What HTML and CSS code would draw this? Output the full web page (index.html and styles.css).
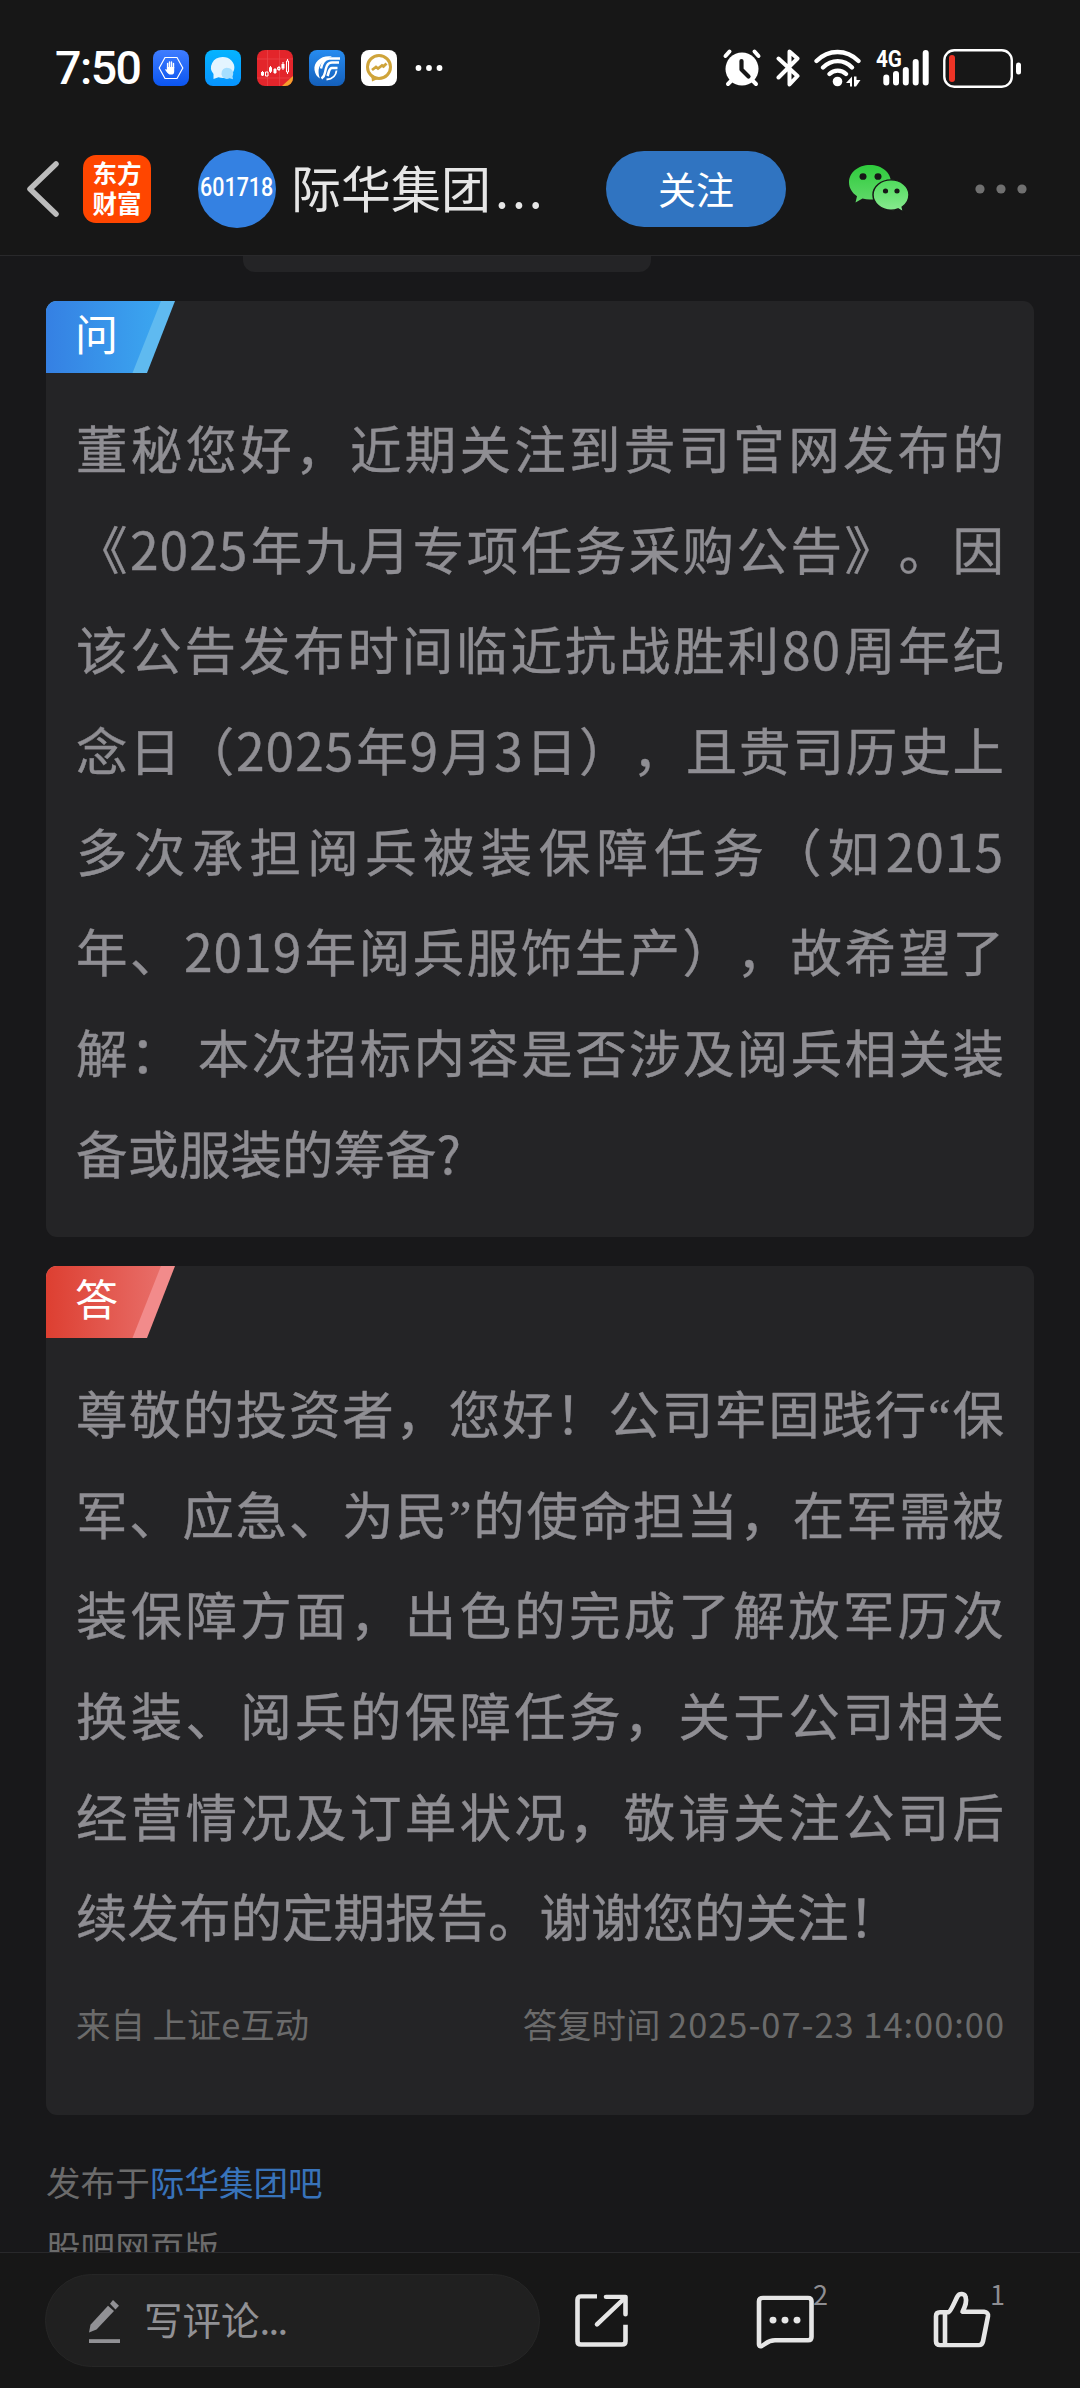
FILE: index.html
```html
<!DOCTYPE html>
<html lang="zh-CN">
<head>
    <meta charset="UTF-8">
    <meta name="viewport" content="width=device-width, initial-scale=1.0">
    <title>际华集团吧</title>
    <link rel="stylesheet" href="styles.css">
</head>
<body>
    <div class="page">
        <div class="status-bar">
            <span class="clock">7:50</span>
            <div class="app-icons">
                <svg width="36" height="36" viewBox="0 0 36 36">
                    <defs><linearGradient id="g1" x1="0" y1="0" x2="0" y2="1"><stop offset="0" stop-color="#3f7dff"/><stop offset="1" stop-color="#0b55f0"/></linearGradient></defs>
                    <rect width="36" height="36" rx="8" fill="url(#g1)"/>
                    <path d="M12 7.500h12l5.800 10.500-5.800 10.500H12L6.200 18z" fill="none" stroke="#fff" stroke-width="1.200"/>
                    <path d="M14.600 18v-4.500M16.500 18v-6M18.500 18v-6M20.500 18v-4.500" stroke="#fff" stroke-width="1.400" stroke-linecap="round"/>
                    <path d="M13.900 17h7.300v4.500c0 2-.8 3-2 3h-2.700c-1.500-.5-3-2.500-4.500-5 .8-.8 1.900.2 1.900.2z" fill="#fff"/>
                </svg>
                <svg width="36" height="36" viewBox="0 0 36 36">
                    <defs><linearGradient id="g2" x1="0" y1="0" x2="0" y2="1"><stop offset="0" stop-color="#05b4ff"/><stop offset="1" stop-color="#0794ff"/></linearGradient></defs>
                    <rect width="36" height="36" rx="8" fill="url(#g2)"/>
                    <path d="M17.500 7a11.500 10.500 0 1 1-4 20.200L8.500 29v-5A11.500 10.500 0 0 1 17.500 7z" fill="#e3f4ff"/>
                    <path d="M23 18a5.500 5.500 0 0 1 4.500 8.200l.5 3-3.500-1A5.500 5.500 0 1 1 23 18z" fill="#a5deff"/>
                </svg>
                <svg width="36" height="36" viewBox="0 0 36 36">
                    <rect width="36" height="36" rx="8" fill="#e3252b"/>
                    <path d="M10.500 0v36M22.500 0v36M0 9h36M0 28h36" stroke="#ea4348" stroke-width=".8"/>
                    <path d="M36 26v2a8 8 0 0 1-8 8h-3z" fill="#f5a02c"/>
                    <path d="M5.500 21v5M13.500 16v7M18 18v6M22 16v5M26 12v8" stroke="#fff" stroke-width="1"/>
                    <path d="M4 22h3v3.500H4zM16.500 19h3v4h-3zM24.500 14h3v4.500h-3z" fill="#fff"/>
                    <path d="M8.500 22h2.500v4H8.500zM12.500 17.500h2v4h-2zM20.500 17.500h2.500v2h-2.500zM29.500 11h2v11h-2zM30.500 9v2M30.500 22v2" fill="none" stroke="#fff" stroke-width="1"/>
                </svg>
                <svg width="36" height="36" viewBox="0 0 36 36">
                    <defs><linearGradient id="g3" x1="0" y1="0" x2="0" y2="1"><stop offset="0" stop-color="#278cf0"/><stop offset="1" stop-color="#145fba"/></linearGradient></defs>
                    <rect width="36" height="36" rx="8" fill="url(#g3)"/>
                    <path d="M23 6.500C12 5 4.500 12 5.500 20c.6 4 2.500 7 5.500 8.500-3-8-2-17 12-22z" fill="#fff"/>
                    <path d="M31 8.500H20c-5 .5-7 5-8 10M30 12.500h-7c-5 0-6 5-7 10-.5 3-2 5-3.500 6" fill="none" stroke="#fff" stroke-width="2.400"/>
                    <path d="M28.500 18h-5.500c-3 0-3 4-4.500 8" fill="none" stroke="#fff" stroke-width="2.600"/>
                    <path d="M27.500 20.500c-.5 5-4 8.500-10 9" fill="none" stroke="#fff" stroke-width="1.800"/>
                </svg>
                <svg width="36" height="36" viewBox="0 0 36 36">
                    <rect width="36" height="36" rx="8" fill="#fff"/>
                    <path d="M10 24l1 7.500 7-3z" fill="#cfa43a"/>
                    <circle cx="18" cy="17" r="11.500" fill="none" stroke="#cfa43a" stroke-width="3"/>
                    <path d="M11 20l4-3 2 1.500 4-3 1.500 1 3-3" fill="none" stroke="#cfa43a" stroke-width="2.800"/>
                </svg>
            </div>
            <svg class="more-apps" width="28" height="8" viewBox="0 0 28 8" fill="#fff"><circle cx="3.500" cy="4" r="2.900"/><circle cx="14" cy="4" r="2.900"/><circle cx="24.500" cy="4" r="2.900"/></svg>
            <div class="system-icons">
                <svg width="40" height="40" viewBox="0 0 40 40">
                    <path d="M3.500 8l4-4.500M36.500 8l-4-4.500M6 36l5-5M34 36l-5-5" stroke="#fff" stroke-width="4" stroke-linecap="round"/>
                    <circle cx="20" cy="21" r="16.500" fill="#fff"/>
                    <path d="M19.500 13v8.500l7 7" fill="none" stroke="#171717" stroke-width="4.200" stroke-linecap="round" stroke-linejoin="round"/>
                </svg>
                <svg class="bluetooth" width="24" height="40" viewBox="0 0 24 40"><path d="M2.500 10.500l19 17.500-8 8.500V3.500l8 7-19 19" fill="none" stroke="#fff" stroke-width="4" stroke-linejoin="round" stroke-linecap="round"/></svg>
                <svg class="wifi" width="48" height="40" viewBox="0 0 48 40">
                    <path d="M2.500 13c12-12 30-12 42 0M9 19.500c8.500-8.500 21-8.500 29 0M15.500 26c4.500-4.500 12-4.500 16.500 0" fill="none" stroke="#fff" stroke-width="4.300" stroke-linecap="round"/>
                    <circle cx="23.500" cy="33.500" r="4.800" fill="#fff"/>
                    <path d="M38 28.500v10h-2v-3.500h-4zM40 28.500v10h2l4.500-6.500h-4v-3.500z" fill="#fff"/>
                </svg>
                <div class="signal">
                    <span class="network">4G</span>
                    <svg width="48" height="40" viewBox="0 0 48 40"><path d="M4.300 29.500v5M14 26v8.500M23.800 22v12.500M33.700 14v20.500M43.700 5v29.500" stroke="#fff" stroke-width="6" stroke-linecap="round"/></svg>
                </div>
                <svg class="battery" width="78" height="39" viewBox="0 0 78 39">
                    <rect x="1.300" y="1.300" width="67.500" height="36.400" rx="10" fill="none" stroke="#fff" stroke-width="2.400"/>
                    <rect x="6" y="6" width="6" height="27" rx="3" fill="#ee3426"/>
                    <rect x="73" y="13.500" width="5" height="12" rx="2.500" fill="#fff"/>
                </svg>
            </div>
        </div>

        <div class="header">
            <svg class="back" width="34" height="56" viewBox="0 0 34 56"><path d="M30 3L4 28l26 25" fill="none" stroke="#bcbcbc" stroke-width="5.500" stroke-linecap="round" stroke-linejoin="round"/></svg>
            <div class="logo"><span>东方</span><span>财富</span></div>
            <div class="stock-code"><span>601718</span></div>
            <div class="stock-name">际华集团<span class="dots">...</span></div>
            <button class="follow">关注</button>
            <svg class="wechat" width="62" height="50" viewBox="0 0 62 52" preserveAspectRatio="none">
                <defs>
                    <linearGradient id="w1" x1="0" y1="0" x2="0" y2="1"><stop offset="0" stop-color="#2ecb3c"/><stop offset="1" stop-color="#62d96b"/></linearGradient>
                    <linearGradient id="w2" x1="0" y1="0" x2="0" y2="1"><stop offset="0" stop-color="#4fdb5c"/><stop offset="1" stop-color="#8bea92"/></linearGradient>
                </defs>
                <path d="M22 1C10 1 1 9 1 19c0 6 3 11 8 14.500L7.500 40l7-4c2.500.7 5 1 7.500 1 12 0 21-8 21-18S34 1 22 1z" fill="url(#w1)"/>
                <path d="M43 16.500c-10 0-18 7-18 15.500s8 16 18 16c2.500 0 5-.5 7-1.300l5.500 3.300-1.300-5.300C59 41.500 61 37 61 32c0-8.500-8-15.500-18-15.500z" fill="url(#w2)" stroke="#171717" stroke-width="1.500"/>
                <g fill="#171717"><circle cx="15" cy="13" r="3.500"/><circle cx="30" cy="13" r="3.500"/><circle cx="37.500" cy="28" r="2.600"/><circle cx="49" cy="28" r="2.600"/></g>
            </svg>
            <svg class="menu" width="54" height="12" viewBox="0 0 54 12" fill="#707070"><circle cx="6" cy="6" r="4.600"/><circle cx="27" cy="6" r="4.600"/><circle cx="48" cy="6" r="4.600"/></svg>
        </div>

        <div class="content">
            <div class="previous"></div>

            <div class="card question">
                <div class="tag">
                    <svg width="129" height="72" viewBox="0 0 129 72">
                        <defs><linearGradient id="blue"><stop offset="0" stop-color="#3580e3"/><stop offset="1" stop-color="#3ba7f0"/></linearGradient></defs>
                        <path d="M0 0h129l-28 72H0z" fill="#5fbaf0"/>
                        <path d="M0 0h115L86.500 72H0z" fill="url(#blue)"/>
                    </svg>
                    <span>问</span>
                </div>
                <div class="text">
                    <p>董秘您好，近期关注到贵司官网发布的</p>
                    <p>《<i>2025</i>年九月专项任务采购公告》。因</p>
                    <p>该公告发布时间临近抗战胜利<i>80</i>周年纪</p>
                    <p>念日（<i>2025</i>年<i>9</i>月<i>3</i>日），且贵司历史上</p>
                    <p>多次承担阅兵被装保障任务（如<i>2015</i></p>
                    <p>年、<i>2019</i>年阅兵服饰生产），故希望了</p>
                    <p>解： 本次招标内容是否涉及阅兵相关装</p>
                    <p class="last">备或服装的筹备?</p>
                </div>
            </div>

            <div class="card answer">
                <div class="tag">
                    <svg width="129" height="72" viewBox="0 0 129 72">
                        <defs><linearGradient id="red"><stop offset="0" stop-color="#dd3f31"/><stop offset="1" stop-color="#e86e69"/></linearGradient></defs>
                        <path d="M0 0h129l-28 72H0z" fill="#f28b8b"/>
                        <path d="M0 0h115L86.500 72H0z" fill="url(#red)"/>
                    </svg>
                    <span>答</span>
                </div>
                <div class="text">
                    <p>尊敬的投资者，您好！公司牢固践行<b>“</b>保</p>
                    <p>军、应急、为民<b>”</b>的使命担当，在军需被</p>
                    <p>装保障方面，出色的完成了解放军历次</p>
                    <p>换装、阅兵的保障任务，关于公司相关</p>
                    <p>经营情况及订单状况，敬请关注公司后</p>
                    <p class="last">续发布的定期报告。谢谢您的关注！</p>
                </div>
                <div class="source">
                    <span>来自 上证e互动</span>
                    <span>答复时间 <span class="time">2025-07-23 14:00:00</span></span>
                </div>
            </div>

            <div class="posted">发布于<a>际华集团吧</a></div>
            <div class="posted">股吧网页版</div>
        </div>

        <div class="footer">
            <div class="comment-box">
                <svg width="34" height="44" viewBox="0 0 34 46" preserveAspectRatio="none" fill="#919195">
                    <path d="M1 35l1.500-8L20 7l6 5.500L8.500 32z"/>
                    <path d="M22 5l3-4 6 6-3.500 4z"/>
                    <path d="M1 42h31v4H1z"/>
                </svg>
                <span class="placeholder">写评论<span>...</span></span>
            </div>
            <svg class="share" width="54" height="54" viewBox="0 0 54 56" preserveAspectRatio="none" fill="none" stroke="#e6e6e6" stroke-width="4.600">
                <path d="M22 3.500H6q-3.500 0-3.500 3.500v43q0 3.500 3.500 3.500h41q3.500 0 3.500-3.500V33"/>
                <path d="M31 4h19.500v18" stroke-linejoin="round" stroke-linecap="round"/><path d="M49 6L22 32.500" stroke-linecap="round"/>
            </svg>
            <div class="action comments">
                <svg width="58" height="54" viewBox="0 0 58 56" preserveAspectRatio="none">
                    <path d="M7 3h45q3.500 0 3.500 3.500v37q0 3.500-3.500 3.500H19c-7 0-9 3.500-13.500 6q-2.500 1-2.500-2V6.500Q3 3 7 3z" fill="none" stroke="#e6e6e6" stroke-width="4.600"/>
                    <g fill="#e6e6e6"><circle cx="17" cy="26" r="3.500"/><circle cx="29" cy="26" r="3.500"/><circle cx="41" cy="26" r="3.500"/></g>
                </svg>
                <span>2</span>
            </div>
            <div class="action likes">
                <svg width="58" height="58" viewBox="0 0 58 60" preserveAspectRatio="none" fill="none" stroke="#e6e6e6" stroke-width="4.600" stroke-linejoin="round">
                    <path d="M7 22h8.500c2.500-1 7-13 9-16.500 2-3.500 7-3 8 .5 1.800 5.500-.5 10-3 15.500H51q4.500.5 4 4.500l-5 26q-.8 4-4 4H7q-4 0-4-4V26q0-4 4-4z"/>
                    <path d="M12 22v34"/>
                </svg>
                <span>1</span>
            </div>
        </div>
    </div>
</body>
</html>
```
FILE: styles.css
```css
* {
    box-sizing: border-box;
}
body {
    margin: 0;
    background-color: #18181a;
    font-family: "Noto Sans CJK SC", sans-serif;
}
svg {
    display: block;
    flex-shrink: 0;
}
.page {
    width: 1080px;
    height: 2388px;
    display: flex;
    flex-direction: column;
    overflow: hidden;
}
.status-bar {
    height: 126px;
    padding: 10px 59px 0 55px;
    display: flex;
    align-items: center;
    background: #171717;
    flex-shrink: 0;
}
.clock {
    width: 98px;
    font: 500 46.500px/50px Roboto, sans-serif;
    letter-spacing: -1.500px;
    color: #fff;
}
.app-icons {
    display: flex;
    gap: 16px;
}
.more-apps {
    margin-left: 18px;
}
.system-icons {
    margin-left: auto;
    display: flex;
    align-items: center;
}
.bluetooth {
    margin-left: 14px;
}
.wifi {
    margin-left: 14px;
}
.signal {
    position: relative;
    margin-left: 20px;
}
.network {
    position: absolute;
    left: -6px;
    top: -1px;
    font: 700 24px/24px Roboto, sans-serif;
    transform: scaleX(.86);
    transform-origin: left;
    color: #fff;
}
.battery {
    margin-left: 13px;
}
.header {
    height: 130px;
    padding: 0 51px 4px 26px;
    display: flex;
    align-items: center;
    background: #171717;
    border-bottom: 1px solid #29292b;
    flex-shrink: 0;
}
.logo {
    width: 68px;
    height: 68px;
    margin-left: 23px;
    padding-top: 3px;
    border-radius: 13px;
    background: #ff4600;
    color: #fff;
    font-weight: 700;
    font-size: 24.500px;
    line-height: 30px;
    display: flex;
    flex-direction: column;
    align-items: center;
}
.stock-code {
    width: 78px;
    height: 78px;
    margin-left: 47px;
    border-radius: 50%;
    background: #3481e2;
    color: #fff;
    font: 500 25px/76px Roboto, sans-serif;
    display: flex;
    justify-content: center;
}
.stock-code span {
    transform: scaleX(.86);
}
.stock-name {
    margin-left: 15px;
    width: 315px;
    padding-bottom: 5px;
    font-size: 50px;
    line-height: 70px;
    color: #e6e6e6;
    white-space: nowrap;
}
.dots {
    margin-left: 4px;
    letter-spacing: 3px;
}
.follow {
    width: 180px;
    height: 76px;
    padding: 0 0 2px;
    border: none;
    border-radius: 38px;
    background: #3074c1;
    color: #fff;
    font-family: inherit;
    font-size: 38px;
}
.wechat {
    margin-left: 62px;
}
.menu {
    margin-left: 64px;
}
.content {
    flex: 1;
    min-height: 0;
    overflow: hidden;
    padding: 0 46px;
}
.previous {
    width: 408px;
    height: 16px;
    margin: 0 auto 29px 197px;
    border-radius: 0 0 12px 12px;
    background: #242426;
}
.card {
    border-radius: 11px;
    overflow: hidden;
    background: #242426;
}
.question {
    height: 936px;
}
.answer {
    height: 849px;
    margin: 29px 0 34px;
}
.tag {
    position: relative;
    width: 129px;
    height: 72px;
}
.tag span {
    position: absolute;
    left: 29px;
    top: 1px;
    font-size: 43px;
    line-height: 60px;
    color: #fff;
}
.text {
    padding: 24px 30px 0;
    font-size: 51.500px;
    line-height: 100.700px;
    color: #8f8e93;
    -webkit-text-stroke: .4px #8f8e93;
    text-spacing-trim: space-all;
}
.text p {
    height: 100.700px;
    margin: 0;
    white-space: nowrap;
    text-align: justify;
    text-align-last: justify;
}
.text .last {
    text-align-last: left;
}
.text i {
    font-style: normal;
    letter-spacing: 1px;
}
.text b {
    font-family: "Liberation Serif", serif;
    font-weight: 400;
    line-height: 0;
}
.source {
    padding: 32px 29px 0 30px;
    display: flex;
    justify-content: space-between;
    font-size: 34.400px;
    line-height: 50px;
    color: #6b6b6b;
}
.time {
    letter-spacing: 1px;
}
.posted {
    font-size: 34.600px;
    line-height: 65px;
    color: #6b6b6b;
}
.posted a {
    color: #3873ba;
}
.footer {
    height: 136px;
    padding: 0 0 0 45px;
    display: flex;
    align-items: flex-start;
    background: #171717;
    border-top: 1px solid #29292b;
    flex-shrink: 0;
}
.comment-box {
    width: 495px;
    height: 93px;
    margin-top: 21px;
    padding-left: 42px;
    display: flex;
    align-items: center;
    gap: 22px;
    border: 1px solid #262626;
    border-radius: 47px;
    background: #202020;
    color: #919195;
    font-size: 38.500px;
}
.placeholder {
    padding-bottom: 6px;
}
.placeholder span {
    letter-spacing: -1.700px;
}
.share {
    margin: 40px 0 0 35px;
}
.action {
    position: relative;
}
.action span {
    position: absolute;
    left: 57px;
    font-size: 27px;
    line-height: 34px;
    color: #8e8e92;
}
.comments {
    margin: 42px 0 0 127px;
}
.comments span {
    top: -18px;
}
.likes {
    margin: 38px 0 0 119px;
}
.likes span {
    top: -14px;
}
```
